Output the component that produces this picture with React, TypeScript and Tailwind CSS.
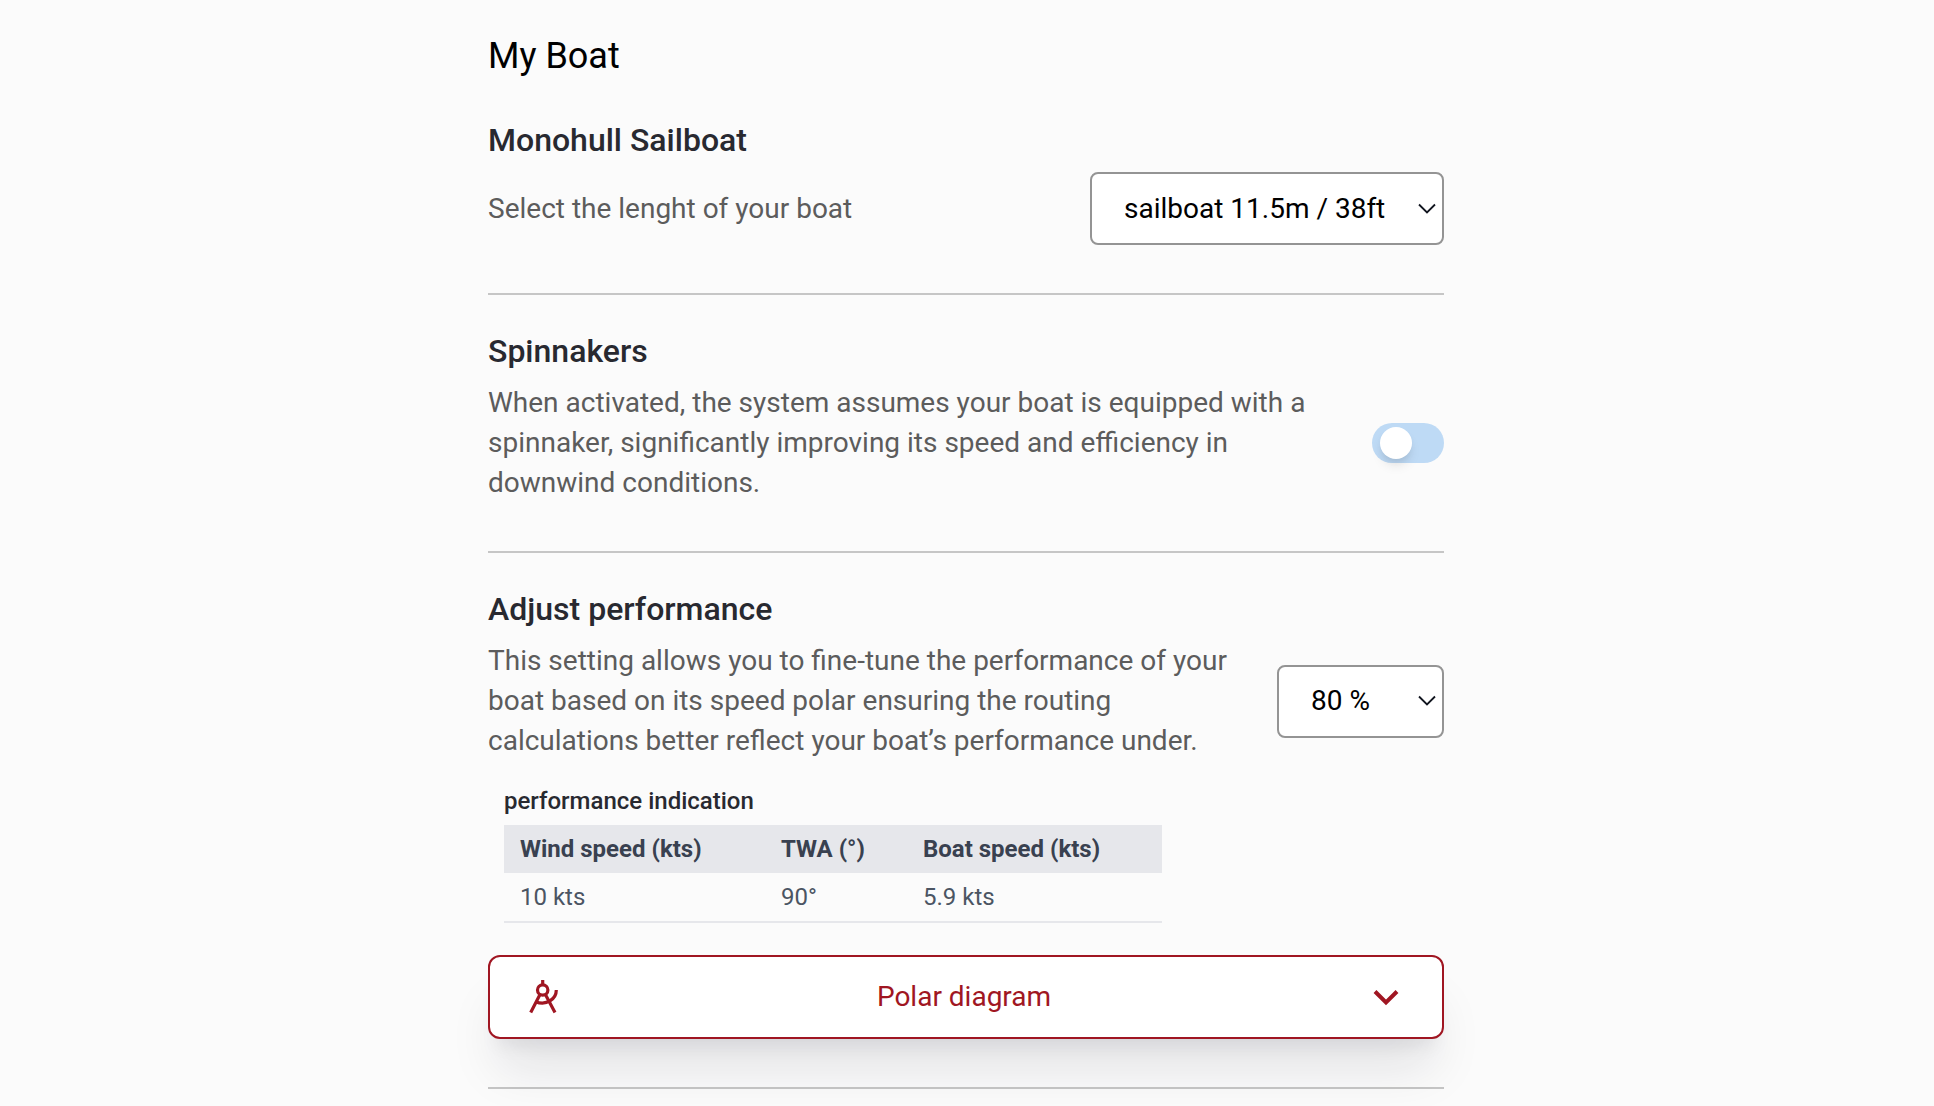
import { useState } from "react";
import type { ReactNode, SelectHTMLAttributes } from "react";
import clsx from "clsx";

const boatLengths = ["sailboat 11.5m / 38ft"];
const performanceLevels = ["80 %"];

const indications = [{ wind: "10 kts", twa: "90°", boat: "5.9 kts" }];

interface SettingSectionProps {
  title: string;
  className?: string;
  children: ReactNode;
}

function SettingSection({ title, className = "pt-8", children }: SettingSectionProps) {
  return (
    <section className={clsx("border-b-2 border-[#c6c6c6] pb-12", className)}>
      <h2 className="mb-2 text-[32px] leading-12 font-medium text-[#282930]">{title}</h2>
      {children}
    </section>
  );
}

interface SelectFieldProps extends SelectHTMLAttributes<HTMLSelectElement> {
  options: string[];
}

function SelectField({ options, className, ...props }: SelectFieldProps) {
  return (
    <div className={clsx("relative shrink-0", className)}>
      <select
        className="block h-[73px] w-full appearance-none rounded-lg border-2 border-[#949494] bg-white pr-10 pl-8 text-[28px] text-black"
        {...props}
      >
        {options.map((option) => (
          <option key={option}>{option}</option>
        ))}
      </select>
      <svg
        className="pointer-events-none absolute top-1/2 right-2 h-3 w-[18px] -translate-y-1/2"
        viewBox="0 0 18 12"
        fill="none"
        stroke="#11151f"
        strokeWidth="1.8"
      >
        <path d="M1 1.5l8 8 8-8" />
      </svg>
    </div>
  );
}

function CompassIcon() {
  return (
    <svg
      className="size-9"
      viewBox="0 0 36 36"
      fill="none"
      stroke="currentColor"
      strokeWidth="3.2"
    >
      <path d="M16.700 1v5" />
      <circle cx="16.700" cy="11" r="5.200" />
      <path d="M14 15.500L4.700 33.500M19.400 15.500L29 33.500" />
      <path d="M30.300 11c0 4.500-2.300 8.300-6 10.700-4.200 2.700-9.800 3-14.600 1" />
    </svg>
  );
}

export default function App() {
  const [spinnakers, setSpinnakers] = useState(false);
  const [showPolar, setShowPolar] = useState(false);

  return (
    <div className="min-h-screen bg-[#fbfbfb] pr-0.5 font-['Roboto',sans-serif]">
      <main className="mx-auto max-w-[956px] pt-8">
        <h1 className="text-4xl leading-12 text-black">My Boat</h1>

        <SettingSection title="Monohull Sailboat" className="pt-9">
          <div className="flex items-center justify-between gap-8">
            <label htmlFor="boat-length" className="text-[28px] leading-10 text-[#5c5c5c]">
              Select the lenght of your boat
            </label>
            <SelectField id="boat-length" options={boatLengths} className="w-[354px]" />
          </div>
        </SettingSection>

        <SettingSection title="Spinnakers">
          <div className="flex items-center justify-between gap-8">
            <label htmlFor="spinnakers" className="text-[28px] leading-10 text-[#5c5c5c]">
              When activated, the system assumes your boat is equipped with a spinnaker,
              significantly improving its speed and efficiency in downwind conditions.
            </label>
            <input
              id="spinnakers"
              type="checkbox"
              role="switch"
              checked={spinnakers}
              onChange={(e) => setSpinnakers(e.target.checked)}
              className="flex h-10 w-[72px] shrink-0 cursor-pointer appearance-none items-center rounded-full bg-[#bedaf5] px-2 before:size-8 before:rounded-full before:bg-white before:shadow-[0_8px_12px_-2px_rgba(0,0,0,0.1),0_4px_8px_-4px_rgba(0,0,0,0.1)] checked:justify-end checked:bg-blue-500"
            />
          </div>
        </SettingSection>

        <SettingSection title="Adjust performance">
          <div className="flex items-center justify-between gap-8">
            <label htmlFor="performance" className="text-[28px] leading-10 text-[#5c5c5c]">
              This setting allows you to fine-tune the performance of your boat based on its
              speed polar ensuring the routing calculations better reflect your boat’s
              performance under.
            </label>
            <SelectField id="performance" options={performanceLevels} className="w-[167px]" />
          </div>

          <table className="mt-4 ml-4 w-[658px] table-fixed text-left text-2xl">
            <caption className="h-12 text-left leading-12 font-medium text-[#282930]">
              performance indication
            </caption>
            <thead className="bg-[#e6e7eb] text-[#394150]">
              <tr className="h-12">
                <th className="w-[261px] px-4 font-bold">Wind speed (kts)</th>
                <th className="w-[142px] px-4 font-bold">TWA (°)</th>
                <th className="px-4 font-bold">Boat speed (kts)</th>
              </tr>
            </thead>
            <tbody className="text-[#4b5563]">
              {indications.map((row) => (
                <tr key={row.wind} className="h-[49px] border-b-2 border-[#e6e7eb]">
                  <td className="px-4">{row.wind}</td>
                  <td className="px-4">{row.twa}</td>
                  <td className="px-4">{row.boat}</td>
                </tr>
              ))}
            </tbody>
          </table>

          <button
            type="button"
            aria-expanded={showPolar}
            onClick={() => setShowPolar(!showPolar)}
            className="mt-8 flex h-[84px] w-full items-center justify-between rounded-xl border-2 border-[#a01622] bg-white px-9 text-[28px] text-[#a01622] shadow-[0_40px_50px_-10px_rgba(17,24,39,0.1),0_16px_20px_-12px_rgba(17,24,39,0.1)]"
          >
            <CompassIcon />
            Polar diagram
            <svg
              className={clsx("size-10", showPolar && "rotate-180")}
              viewBox="0 0 40 40"
              fill="none"
              stroke="currentColor"
              strokeWidth="4"
            >
              <path d="M9 14.500l11 11 11-11" />
            </svg>
          </button>
        </SettingSection>
      </main>
    </div>
  );
}
